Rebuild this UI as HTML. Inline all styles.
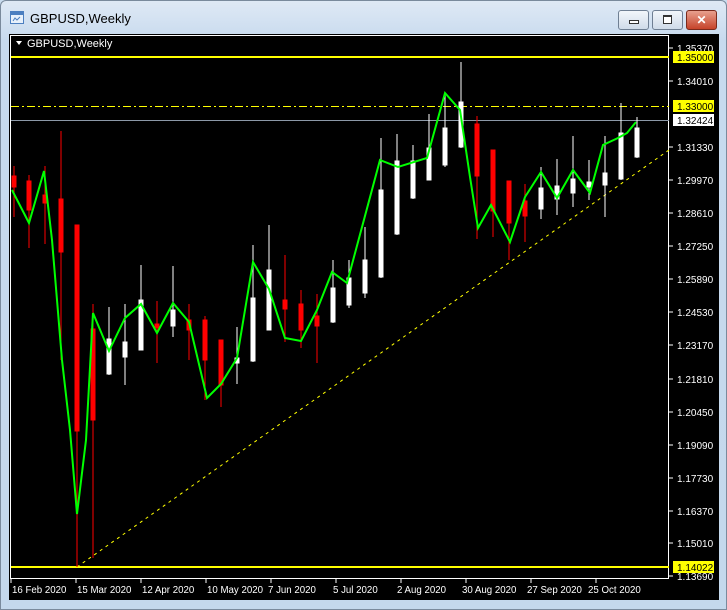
<!DOCTYPE html>
<html><head><meta charset="utf-8"><style>
body{margin:0;width:727px;height:610px;overflow:hidden;background:#c9dcef;font-family:"Liberation Sans",sans-serif}
.win{position:absolute;left:0;top:0;width:725px;height:608px;border:1px solid #7a8a9c;border-radius:6px 6px 0 0;background:linear-gradient(#dfe9f5,#c7daee 40px,#c4d8ec)}
.title{position:absolute;left:30px;top:11px;font-size:13px;color:#000}
.btn{position:absolute;top:10px;height:18px;border:1px solid #6f7f93;border-radius:3px;background:linear-gradient(#f2f6fb,#cfdbe9)}
</style></head><body>
<div class="win"></div>
<svg style="position:absolute;left:10px;top:11px" width="14" height="13"><rect x="0.5" y="0.5" width="13" height="12" fill="#e8f1fb" stroke="#4c7fc0"/><rect x="1" y="1" width="12" height="3" fill="#4c7fc0"/><path d="M3 10 L5 7 L7 9 L10 6" stroke="#4c7fc0" fill="none"/></svg>
<div class="title">GBPUSD,Weekly</div>
<div class="btn" style="left:618px;width:29px"><div style="position:absolute;left:10px;top:9px;width:8px;height:2px;background:#fff;border:1px solid #333"></div></div>
<div class="btn" style="left:652px;width:29px"><div style="position:absolute;left:10px;top:4px;width:7px;height:6px;border:1px solid #333;border-top-width:2px;background:#fff"></div></div>
<div class="btn" style="left:686px;width:29px;background:linear-gradient(#e8a08e,#c6432a);border-color:#7a2a1c;color:#fff;font-weight:bold;font-size:12px;text-align:center;line-height:18px">✕</div>
<svg style="position:absolute;left:9px;top:34px" width="710" height="566" viewBox="9 34 710 566" font-family="Liberation Sans, sans-serif" font-size="10">
<rect x="9" y="34" width="710" height="566" fill="#000"/>
<rect x="10.5" y="35.5" width="658" height="543" fill="none" stroke="#fff"/>
<path d="M16 41 L22 41 L19 45Z" fill="#fff"/>
<text x="27" y="47" fill="#fff" font-size="11">GBPUSD,Weekly</text>
<line x1="11" y1="57" x2="669" y2="57" stroke="#ff0" stroke-width="2"/>
<line x1="11" y1="567" x2="669" y2="567" stroke="#ff0" stroke-width="2"/>
<line x1="11" y1="106.5" x2="669" y2="106.5" stroke="#ff0" stroke-dasharray="8,3,2,3"/>
<line x1="11" y1="120.5" x2="669" y2="120.5" stroke="#8c99a8"/>
<line x1="77" y1="567" x2="669" y2="150" stroke="#ff0" stroke-dasharray="3,4"/>
<g stroke-width="1">
<g fill="#f00" stroke="#f00">
<line x1="14" y1="166" x2="14" y2="217"/><rect x="12" y="176" width="4" height="11"/>
<line x1="29" y1="175" x2="29" y2="248"/><rect x="27" y="181" width="4" height="29"/>
<line x1="45" y1="166" x2="45" y2="244"/><rect x="43" y="195" width="4" height="8"/>
<line x1="61" y1="131" x2="61" y2="360"/><rect x="59" y="199" width="4" height="53"/>
<line x1="77" y1="225" x2="77" y2="567"/><rect x="75" y="225" width="4" height="206"/>
<line x1="93" y1="304" x2="93" y2="558"/><rect x="91" y="329" width="4" height="91"/>
<line x1="157" y1="301" x2="157" y2="363"/><rect x="155" y="324" width="4" height="4"/>
<line x1="189" y1="304" x2="189" y2="360"/><rect x="187" y="320" width="4" height="10"/>
<line x1="205" y1="316" x2="205" y2="400"/><rect x="203" y="320" width="4" height="40"/>
<line x1="221" y1="340" x2="221" y2="407"/><rect x="219" y="340" width="4" height="45"/>
<line x1="285" y1="255" x2="285" y2="342"/><rect x="283" y="300" width="4" height="9"/>
<line x1="301" y1="290" x2="301" y2="348"/><rect x="299" y="304" width="4" height="26"/>
<line x1="317" y1="294" x2="317" y2="363"/><rect x="315" y="316" width="4" height="10"/>
<line x1="477" y1="116" x2="477" y2="239"/><rect x="475" y="124" width="4" height="52"/>
<line x1="493" y1="150" x2="493" y2="237"/><rect x="491" y="150" width="4" height="61"/>
<line x1="509" y1="181" x2="509" y2="260"/><rect x="507" y="181" width="4" height="42"/>
<line x1="525" y1="184" x2="525" y2="242"/><rect x="523" y="201" width="4" height="15"/>
</g>
<g fill="#fff" stroke="#fff">
<line x1="109" y1="307" x2="109" y2="375"/><rect x="107" y="339" width="4" height="35"/>
<line x1="125" y1="304" x2="125" y2="385"/><rect x="123" y="342" width="4" height="15"/>
<line x1="141" y1="265" x2="141" y2="350"/><rect x="139" y="300" width="4" height="50"/>
<line x1="173" y1="266" x2="173" y2="337"/><rect x="171" y="310" width="4" height="16"/>
<line x1="237" y1="327" x2="237" y2="384"/><rect x="235" y="358" width="4" height="5"/>
<line x1="253" y1="245" x2="253" y2="362"/><rect x="251" y="298" width="4" height="63"/>
<line x1="269" y1="225" x2="269" y2="330"/><rect x="267" y="270" width="4" height="60"/>
<line x1="333" y1="260" x2="333" y2="323"/><rect x="331" y="288" width="4" height="34"/>
<line x1="349" y1="260" x2="349" y2="308"/><rect x="347" y="278" width="4" height="27"/>
<line x1="365" y1="227" x2="365" y2="298"/><rect x="363" y="260" width="4" height="33"/>
<line x1="381" y1="138" x2="381" y2="278"/><rect x="379" y="190" width="4" height="87"/>
<line x1="397" y1="134" x2="397" y2="235"/><rect x="395" y="161" width="4" height="73"/>
<line x1="413" y1="145" x2="413" y2="199"/><rect x="411" y="161" width="4" height="37"/>
<line x1="429" y1="114" x2="429" y2="180"/><rect x="427" y="148" width="4" height="32"/>
<line x1="445" y1="92" x2="445" y2="167"/><rect x="443" y="128" width="4" height="37"/>
<line x1="461" y1="62" x2="461" y2="148"/><rect x="459" y="102" width="4" height="45"/>
<line x1="541" y1="167" x2="541" y2="219"/><rect x="539" y="188" width="4" height="21"/>
<line x1="557" y1="159" x2="557" y2="215"/><rect x="555" y="186" width="4" height="13"/>
<line x1="573" y1="136" x2="573" y2="207"/><rect x="571" y="179" width="4" height="14"/>
<line x1="589" y1="160" x2="589" y2="200"/><rect x="587" y="182" width="4" height="5"/>
<line x1="605" y1="136" x2="605" y2="217"/><rect x="603" y="173" width="4" height="12"/>
<line x1="621" y1="103" x2="621" y2="180"/><rect x="619" y="133" width="4" height="46"/>
<line x1="637" y1="117" x2="637" y2="158"/><rect x="635" y="128" width="4" height="29"/>
</g></g>
<polyline fill="none" stroke="#0f0" stroke-width="2" points="12,190 29,223 44,171 52,240 62,360 70,430 77,514 86,440 93,313 109,351 125,318 141,304 157,333 173,303 189,322 207,398 221,384 237,358 253,262 269,289 285,338 301,341 317,310 332,272 347,283 380,160 398,167 427,158 445,93 460,110 470,177 478,228 491,205 510,242 525,197 541,172 557,198 573,170 590,193 603,145 618,138 627,133 636,122"/>
<g fill="#fff" stroke="#fff">
<line x1="669" y1="48" x2="673" y2="48"/><line x1="669" y1="81" x2="673" y2="81"/><line x1="669" y1="147" x2="673" y2="147"/><line x1="669" y1="180" x2="673" y2="180"/><line x1="669" y1="213" x2="673" y2="213"/><line x1="669" y1="246" x2="673" y2="246"/><line x1="669" y1="279" x2="673" y2="279"/><line x1="669" y1="312" x2="673" y2="312"/><line x1="669" y1="345" x2="673" y2="345"/><line x1="669" y1="379" x2="673" y2="379"/><line x1="669" y1="412" x2="673" y2="412"/><line x1="669" y1="445" x2="673" y2="445"/><line x1="669" y1="478" x2="673" y2="478"/><line x1="669" y1="511" x2="673" y2="511"/><line x1="669" y1="543" x2="673" y2="543"/><line x1="669" y1="576" x2="673" y2="576"/>
<text x="677" y="52" stroke="none">1.35370</text><text x="677" y="85" stroke="none">1.34010</text><text x="677" y="151" stroke="none">1.31330</text><text x="677" y="184" stroke="none">1.29970</text><text x="677" y="217" stroke="none">1.28610</text><text x="677" y="250" stroke="none">1.27250</text><text x="677" y="283" stroke="none">1.25890</text><text x="677" y="316" stroke="none">1.24530</text><text x="677" y="349" stroke="none">1.23170</text><text x="677" y="383" stroke="none">1.21810</text><text x="677" y="416" stroke="none">1.20450</text><text x="677" y="449" stroke="none">1.19090</text><text x="677" y="482" stroke="none">1.17730</text><text x="677" y="515" stroke="none">1.16370</text><text x="677" y="547" stroke="none">1.15010</text><text x="677" y="580" stroke="none">1.13690</text>
</g>
<rect x="673" y="51" width="41" height="12" fill="#ff0"/><text x="677" y="61" fill="#000">1.35000</text>
<rect x="673" y="100" width="41" height="12" fill="#ff0"/><text x="677" y="110" fill="#000">1.33000</text>
<rect x="673" y="114" width="41" height="12" fill="#fff"/><text x="677" y="124" fill="#000">1.32424</text>
<rect x="673" y="561" width="41" height="12" fill="#ff0"/><text x="677" y="571" fill="#000">1.14022</text>
<g fill="#fff" stroke="#fff">
<line x1="11" y1="578" x2="11" y2="583"/><line x1="76" y1="578" x2="76" y2="583"/><line x1="141" y1="578" x2="141" y2="583"/><line x1="206" y1="578" x2="206" y2="583"/><line x1="271" y1="578" x2="271" y2="583"/><line x1="336" y1="578" x2="336" y2="583"/><line x1="401" y1="578" x2="401" y2="583"/><line x1="466" y1="578" x2="466" y2="583"/><line x1="531" y1="578" x2="531" y2="583"/><line x1="596" y1="578" x2="596" y2="583"/>
<g stroke="none" font-size="9.7"><text x="12" y="593">16 Feb 2020</text><text x="77" y="593">15 Mar 2020</text><text x="142" y="593">12 Apr 2020</text><text x="207" y="593">10 May 2020</text><text x="268" y="593">7 Jun 2020</text><text x="333" y="593">5 Jul 2020</text><text x="397" y="593">2 Aug 2020</text><text x="462" y="593">30 Aug 2020</text><text x="527" y="593">27 Sep 2020</text><text x="588" y="593">25 Oct 2020</text></g>
</g>
</svg>
</body></html>
